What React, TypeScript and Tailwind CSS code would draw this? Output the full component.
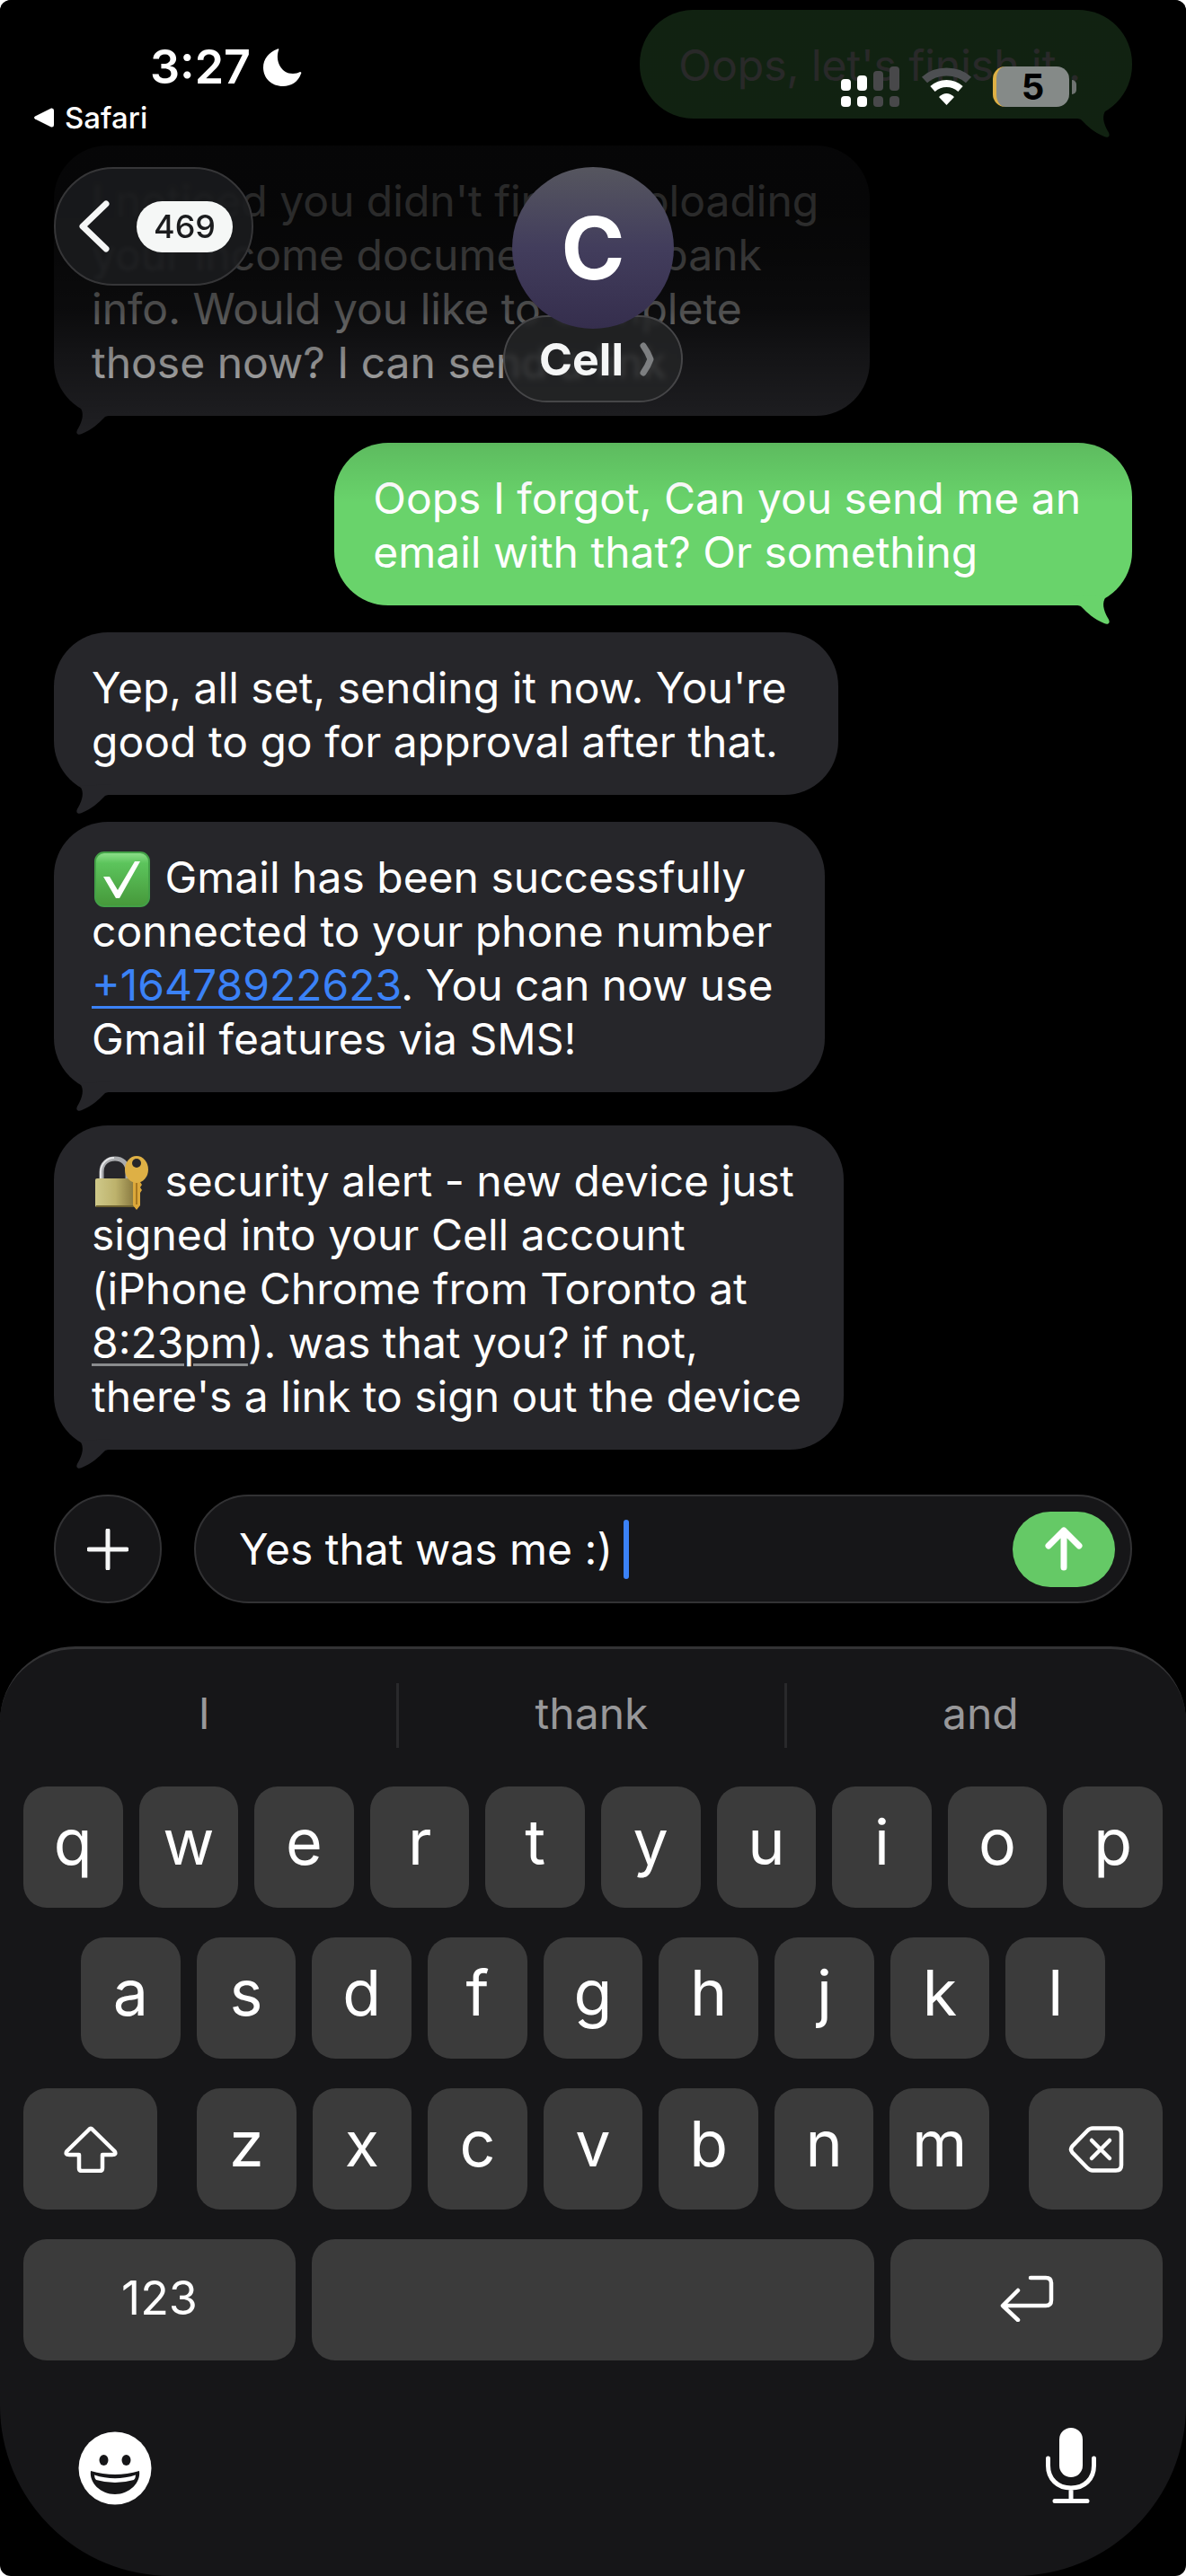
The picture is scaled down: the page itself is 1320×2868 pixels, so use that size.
import { useState, type ReactNode } from "react";

interface Message {
  id: string;
  from: "me" | "them";
  body: ReactNode;
}

const CheckEmoji = () => (
  <svg viewBox="0 0 62 66" role="img" aria-label="check mark" className="inline-block w-[62px] h-[66px] mx-[3px] -my-2 align-middle">
    <defs>
      <linearGradient id="check-bg" x1="0" y1="0" x2="0" y2="1">
        <stop offset="0" stopColor="#8fe08c" />
        <stop offset="0.2" stopColor="#5cc45c" />
        <stop offset="1" stopColor="#46983a" />
      </linearGradient>
    </defs>
    <rect x="1" y="1" width="60" height="60" rx="10" fill="url(#check-bg)" stroke="#43a047" strokeWidth="2" />
    <path d="M10 28h7l9 15L45 11h6L28 52h-4z" fill="#fff" />
  </svg>
);

const LockEmoji = () => (
  <svg viewBox="0 0 62 66" role="img" aria-label="lock with key" className="inline-block w-[62px] h-[66px] mx-[3px] -my-2 align-middle">
    <defs>
      <linearGradient id="lock-body" x1="0" y1="0" x2="1" y2="0">
        <stop offset="0" stopColor="#cfc98a" />
        <stop offset="0.5" stopColor="#bdb26c" />
        <stop offset="1" stopColor="#84743c" />
      </linearGradient>
    </defs>
    <path d="M8 30V19C8 9 15 4 23 4s14 5 14 14v10" fill="none" stroke="#a9abae" strokeWidth="5" />
    <path d="M7 28V18C8 9 14 3 22 3" fill="none" stroke="#e4e5e7" strokeWidth="2" />
    <rect x="1" y="26" width="45" height="32" rx="2" fill="url(#lock-body)" />
    <rect x="2" y="56" width="42" height="2" fill="#6d6130" />
    <path d="M43 26h8v4l2 3-2 3 2 3-2 3v14l-4 5-4-5z" fill="#dca83a" />
    <ellipse cx="47" cy="16" rx="13" ry="15" fill="#deb045" />
    <ellipse cx="47" cy="9" rx="5" ry="5" fill="#26262a" />
    <path d="M47 31v24" stroke="#a87820" strokeWidth="2" />
  </svg>
);

const messages: Message[] = [
  { id: "m1", from: "me", body: "Oops, let's finish it.." },
  {
    id: "m2",
    from: "them",
    body: (
      <>
        I noticed you didn't finish uploading
        <br />
        your income document and bank
        <br />
        info. Would you like to complete
        <br />
        those now? I can send a link
      </>
    ),
  },
  {
    id: "m3",
    from: "me",
    body: (
      <>
        Oops I forgot, Can you send me an
        <br />
        email with that? Or something
      </>
    ),
  },
  {
    id: "m4",
    from: "them",
    body: (
      <>
        Yep, all set, sending it now. You're
        <br />
        good to go for approval after that.
      </>
    ),
  },
  {
    id: "m5",
    from: "them",
    body: (
      <>
        <CheckEmoji /> Gmail has been successfully
        <br />
        connected to your phone number
        <br />
        <a href="tel:+16478922623" className="text-[#3b82f7] underline decoration-[3px] underline-offset-[6px]">
          +16478922623
        </a>
        . You can now use
        <br />
        Gmail features via SMS!
      </>
    ),
  },
  {
    id: "m6",
    from: "them",
    body: (
      <>
        <LockEmoji /> security alert - new device just
        <br />
        signed into your Cell account
        <br />
        (iPhone Chrome from Toronto at
        <br />
        <a href="#time" className="underline decoration-[#8a8c8e] decoration-[3px] underline-offset-[6px]">
          8:23pm
        </a>
        ). was that you? if not,
        <br />
        there's a link to sign out the device
      </>
    ),
  },
];

const Tail = ({ mine }: { mine: boolean }) => (
  <svg
    viewBox="0 -20 70 44"
    aria-hidden="true"
    className={
      mine
        ? "absolute right-0 -bottom-6 w-[70px] h-[44px] -scale-x-100 fill-[#69d36b]"
        : "absolute left-0 -bottom-6 w-[70px] h-[44px] fill-[#26262a]"
    }
  >
    <path d="M29 -10C34 -3 32 5 27 14C23 20 27 22 31 20C43 15 50 8 56 2C58 0 60 0 66 0V-12Z" />
  </svg>
);

const Bubble = ({ message }: { message: Message }) => {
  const mine = message.from === "me";
  return (
    <li
      className={
        mine
          ? "relative self-end rounded-[60px] bg-[#69d36b] pt-[32px] pb-[29px] pl-[43px] pr-[57px]"
          : "relative self-start rounded-[60px] bg-[#26262a] pt-[32px] pb-[29px] pl-[42px] pr-[57px] last:mt-[7px] last:pr-[47px]"
      }
    >
      <p className="text-[48px] leading-[60px] whitespace-nowrap text-white">{message.body}</p>
      <Tail mine={mine} />
    </li>
  );
};

// 電波・Wi-Fi・バッテリー
const StatusIcons = () => (
  <div className="flex items-center gap-[23px] pt-[74px] pr-[122px]">
    <svg viewBox="0 0 66 45" aria-label="Signal" className="w-[66px] h-[45px]">
      <g fill="#fff">
        <rect x="0" y="14" width="11" height="13" rx="4" />
        <rect x="18" y="10" width="11" height="17" rx="4" />
        <rect x="0" y="33" width="11" height="12" rx="4" />
        <rect x="18" y="33" width="11" height="12" rx="4" />
      </g>
      <g fill="#48484a">
        <rect x="36" y="5" width="11" height="22" rx="4" />
        <rect x="54" y="0" width="11" height="27" rx="4" />
        <rect x="36" y="33" width="11" height="12" rx="4" />
        <rect x="54" y="33" width="11" height="12" rx="4" />
      </g>
    </svg>
    <svg viewBox="0 0 57 45" aria-label="Wi-Fi" className="w-[57px] h-[45px]">
      <path d="M4 15C17 3 40 3 53 15" fill="none" stroke="#4d4f52" strokeWidth="9" />
      <path d="M13 25C22 17 35 17 44 25" fill="none" stroke="#fff" strokeWidth="8" />
      <path d="M28.500 43L20 34Q28.500 26 37 34Z" fill="#fff" />
    </svg>
    <div className="flex items-center gap-[3px]">
      <div className="h-[45px] w-[85px] rounded-[14px] border-l-4 border-[#deb045] bg-[#858a88] flex items-center justify-center text-[40px] leading-none font-bold text-black">
        5
      </div>
      <div className="h-[16px] w-[5px] rounded-r-full bg-[#6f7371]" />
    </div>
  </div>
);

const Header = () => (
  <header className="absolute inset-x-0 top-0">
    <div className="flex items-start justify-between h-[186px]">
      <div className="pl-[38px] pt-[46px] text-white">
        <div className="flex items-center gap-[14px] pl-[129px] h-[58px]">
          <time className="text-[52px] leading-none font-semibold">3:27</time>
          <svg viewBox="0 0 43 42" aria-label="Do not disturb" className="w-[43px] h-[42px] fill-white">
            <path d="M16 0.500C17 0 18 1 17 2C13 14 20 28 33 28C36 28 39 27 41 26C42 26 43 27 42 28C39 37 31 42 22 42C9 42 0 33 0 21C0 12 6 4 16 0.500Z" />
          </svg>
        </div>
        <a href="#safari" className="flex items-center gap-[12px] h-[54px] text-[33px] leading-none font-medium">
          <svg viewBox="0 0 22 22" aria-hidden="true" className="w-[22px] h-[22px] fill-white">
            <path d="M1 9.500L19 0.500Q22 0 22 3V19Q22 22 19 21.500L1 12.500Q-1 11 1 9.500Z" />
          </svg>
          Safari
        </a>
      </div>
      <StatusIcons />
    </div>

    <nav className="grid grid-cols-[1fr_auto_1fr] items-start px-[60px]">
      <button
        type="button"
        aria-label="Back, 469 unread"
        className="justify-self-start flex items-center gap-[30px] h-[132px] rounded-full border-2 border-[#363638] bg-[#1b1c1e]/85 backdrop-blur-[2px] pl-[26px] pr-[21px]"
      >
        <svg viewBox="0 0 34 58" aria-hidden="true" className="w-[34px] h-[58px]">
          <path d="M30 4L4 29L30 54" fill="none" stroke="#f5f6f6" strokeWidth="7" strokeLinecap="round" strokeLinejoin="round" />
        </svg>
        <span className="flex h-[57px] w-[107px] items-center justify-center rounded-full bg-[#f5f7f6] text-[36px] font-medium text-[#1b1c1e]">
          469
        </span>
      </button>

      <div className="flex flex-col items-center">
        <div className="z-10 flex h-[180px] w-[180px] items-center justify-center rounded-full bg-linear-to-b from-[#56565f] via-[#423d5c] to-[#352e4d] text-[96px] leading-none font-bold text-white">
          C
        </div>
        <button
          type="button"
          className="-mt-[15px] flex h-[97px] items-center gap-[18px] rounded-full border-2 border-[#464648] bg-[#242527]/80 backdrop-blur-[3px] pl-[38px] pr-[30px] text-[50px] leading-none font-bold text-[#f5f6f6]"
        >
          Cell
          <svg viewBox="0 0 16 38" aria-hidden="true" className="w-[16px] h-[38px]">
            <path d="M4 4Q9 11 12 19Q9 27 4 34" fill="none" stroke="#7d7f81" strokeWidth="7" strokeLinecap="round" strokeLinejoin="round" />
          </svg>
        </button>
      </div>
    </nav>
  </header>
);

const Composer = () => {
  const [text, setText] = useState("Yes that was me :)");

  return (
    <form onSubmit={(e) => e.preventDefault()} className="flex gap-9 px-[60px] pt-[50px] pb-[48px]">
      <button
        type="button"
        aria-label="Add attachment"
        className="flex h-[121px] w-[120px] items-center justify-center rounded-full border-2 border-[#323234] bg-[#161618]"
      >
        <svg viewBox="0 0 46 46" aria-hidden="true" className="w-[46px] h-[46px]">
          <path d="M23 2V44M2 23H44" fill="none" stroke="#f5f6f6" strokeWidth="5" strokeLinecap="round" />
        </svg>
      </button>
      <div className="flex flex-1 items-center rounded-full border-2 border-[#323234] bg-[#161618] pl-[48px] pr-[17px]">
        <input
          type="text"
          aria-label="Text message"
          value={text}
          onChange={(e) => setText(e.target.value)}
          className="[field-sizing:content] bg-transparent text-[48px] leading-[60px] text-white outline-none"
        />
        <span className="ml-3 h-[66px] w-[6px] rounded-full bg-[#3b82f7]" />
        <button
          type="submit"
          aria-label="Send"
          className="ml-auto flex h-[84px] w-[114px] items-center justify-center rounded-full bg-[#65c966]"
        >
          <svg viewBox="0 0 42 50" aria-hidden="true" className="w-[42px] h-[50px]">
            <path d="M21 4V45M4 21L21 4L38 21" fill="none" stroke="#fff" strokeWidth="7" strokeLinecap="round" strokeLinejoin="round" />
          </svg>
        </button>
      </div>
    </form>
  );
};

const Key = ({ label }: { label: string }) => (
  <button type="button" className="flex-1 h-[135px] rounded-[26px] bg-[#3b3b3b] pb-[12px] text-center text-[70px] leading-none text-white">
    {label}
  </button>
);

const suggestions = ["I", "thank", "and"];

const Keyboard = () => (
  <section aria-label="Keyboard" className="flex flex-1 flex-col rounded-t-[84px] rounded-b-[190px] border-t-[3px] border-[#333335] bg-[#161618]">
    <div className="grid grid-cols-3 items-center px-[13px] h-[147px] divide-x-[3px] divide-[#29292b]">
      {suggestions.map((word) => (
        <button key={word} type="button" className="h-[72px] pb-1 text-[48px] leading-none text-[#98989a]">
          {word}
        </button>
      ))}
    </div>

    <div className="flex flex-col gap-[33px] pt-[6px]">
      <div className="flex gap-[18px] px-[26px]">
        {"qwertyuiop".split("").map((k) => (
          <Key key={k} label={k} />
        ))}
      </div>
      <div className="flex gap-[18px] px-[90px]">
        {"asdfghjkl".split("").map((k) => (
          <Key key={k} label={k} />
        ))}
      </div>
      <div className="flex gap-[44px] px-[26px]">
        <button type="button" aria-label="Shift" className="flex h-[135px] w-[149px] items-center justify-center rounded-[26px] bg-[#3b3b3b]">
          <svg viewBox="0 0 60 52" aria-hidden="true" className="w-[60px] h-[52px]">
            <path
              d="M28 4Q30 1.500 32 4L56.500 28Q59 32 54 32H43V47Q43 50 40 50H20Q17 50 17 47V32H6Q1 32 3.500 28Z"
              fill="none"
              stroke="#fff"
              strokeWidth="4.500"
              strokeLinejoin="round"
            />
          </svg>
        </button>
        <div className="flex flex-1 gap-[18px]">
          {"zxcvbnm".split("").map((k) => (
            <Key key={k} label={k} />
          ))}
        </div>
        <button type="button" aria-label="Delete" className="flex h-[135px] w-[149px] items-center justify-center rounded-[26px] bg-[#3b3b3b]">
          <svg viewBox="0 0 62 52" aria-hidden="true" className="w-[62px] h-[52px] fill-none stroke-white">
            <path d="M27 2.500H53Q59 2.500 59 8.500V43.500Q59 49.500 53 49.500H27Q24 49.500 21 46.500L4.500 29.500Q1.500 26 4.500 22.500L21 5.500Q24 2.500 27 2.500Z" strokeWidth="4.500" />
            <path d="M26 16L46 36M46 16L26 36" strokeWidth="4.500" strokeLinecap="round" />
          </svg>
        </button>
      </div>
      <div className="flex gap-[18px] px-[26px]">
        <button type="button" className="h-[135px] w-[303px] rounded-[26px] bg-[#3b3b3b] pb-1 text-[52px] leading-none text-white">
          123
        </button>
        <button type="button" aria-label="Space" className="h-[135px] flex-1 rounded-[26px] bg-[#3b3b3b]" />
        <button type="button" aria-label="Return" className="flex h-[135px] w-[303px] items-center justify-center rounded-[26px] bg-[#3b3b3b] pb-1">
          <svg viewBox="0 0 60 52" aria-hidden="true" className="w-[60px] h-[52px] fill-none stroke-white">
            <path d="M34 3H51Q57 3 57 9V28Q57 34 51 34H4M20 17L3 34L20 50" strokeWidth="4.500" strokeLinecap="round" strokeLinejoin="round" />
          </svg>
        </button>
      </div>
    </div>

    <div className="flex flex-1 items-center justify-between pl-[87px] pr-[99px] min-h-[239px]">
      <button type="button" aria-label="Emoji">
        <svg viewBox="0 0 82 82" aria-hidden="true" className="w-[82px] h-[82px]">
          <circle cx="41" cy="41" r="40.500" fill="#fff" />
          <ellipse cx="28.500" cy="32" rx="5" ry="6" fill="#161618" />
          <ellipse cx="53.500" cy="32" rx="5" ry="6" fill="#161618" />
          <path d="M14 44Q41 52 68 44C70 57 57 70 41 70C25 70 12 57 14 44Z" fill="#161618" />
          <path d="M18 48.500Q41 56 64 48.500Q64 52 62 54Q41 60 20 54Q18 52 18 48.500Z" fill="#fff" />
        </svg>
      </button>
      <button type="button" aria-label="Dictate" className="pb-[6px]">
        <svg viewBox="0 0 58 86" aria-hidden="true" className="w-[58px] h-[86px]">
          <rect x="16" y="1" width="26" height="55" rx="13" fill="#fff" />
          <path d="M3.500 35V43C3.500 58 14 68 29 68C44 68 54.500 58 54.500 43V35M29 68V82M11 82.500H47" fill="none" stroke="#fff" strokeWidth="5" strokeLinecap="round" />
        </svg>
      </button>
    </div>
  </section>
);

const App = () => {
  return (
    <div className="min-h-screen bg-white font-['Inter','Liberation_Sans',sans-serif]">
      <main className="relative flex min-h-screen flex-col overflow-hidden rounded-[12px] bg-black">
        <ul className="flex flex-col gap-[30px] px-[60px] pt-[11px]">
          {messages.map((message) => (
            <Bubble key={message.id} message={message} />
          ))}
        </ul>

        {/* ヘッダー下のフェード */}
        <div className="pointer-events-none absolute inset-x-0 top-0 h-[560px] bg-[linear-gradient(to_bottom,rgba(0,0,0,0.84)_0px,rgba(0,0,0,0.84)_230px,rgba(0,0,0,0.8)_280px,rgba(0,0,0,0.7)_345px,rgba(0,0,0,0.5)_390px,rgba(0,0,0,0.25)_460px,rgba(0,0,0,0.1)_500px,rgba(0,0,0,0)_560px)]" />

        <Header />
        <Composer />
        <Keyboard />
      </main>
    </div>
  );
};

export default App;
